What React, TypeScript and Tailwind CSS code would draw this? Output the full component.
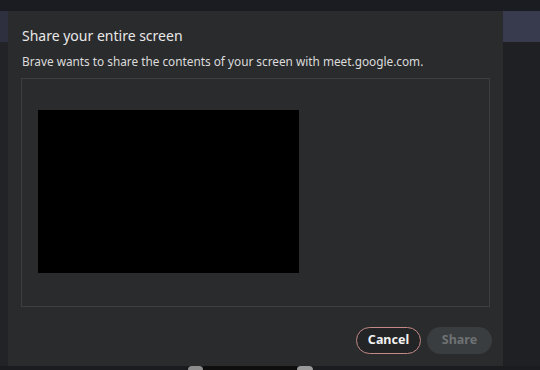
export default function App() {
  return (
    <div
      className="flex h-[370px] w-[540px] flex-col overflow-hidden bg-[#1c1d22]"
      style={{ fontFamily: '"Noto Sans", "Open Sans", sans-serif' }}
    >
      <div className="h-[11px] shrink-0 bg-[#1b1c21]" />
      <div className="flex h-[355px] shrink-0">
        <div className="flex w-[8px] flex-col">
          <div className="h-[31px] bg-[#2e3040]" />
          <div className="flex-1 bg-[#222327]" />
        </div>

        <div className="flex w-[495px] flex-col bg-[#2a2b2d] px-[13px] pb-[12px] pt-[15px]">
          <h1 className="h-[20px] pl-[1px] text-[14px] leading-[20px] text-[#e8e8e8]">
            Share your entire screen
          </h1>
          <p className="mt-[7px] h-[16px] pl-[1px] text-[11.8px] leading-[16px] text-[#dcdcdc]">
            Brave wants to share the contents of your screen with meet.google.com.
          </p>
          <div className="mt-[9px] h-[229px] w-[469px] border border-[#3d3e41] pl-[16px] pt-[31px]">
            <div className="h-[163px] w-[261px] bg-black" />
          </div>
          <div className="mt-[20px] flex justify-end gap-[6px]">
            <button className="flex h-[27px] w-[65px] items-center justify-center rounded-full border-[1.5px] border-[#c48987] bg-[#232426] text-[12.5px] font-bold text-[#f2f2f2]">
              Cancel
            </button>
            <button className="mr-[-2px] flex h-[27px] w-[65px] items-center justify-center rounded-full bg-[#3a3d3f] text-[12.5px] font-bold text-[#6e7275]">
              Share
            </button>
          </div>
        </div>

        <div className="flex flex-1 flex-col">
          <div className="h-[31px] bg-[#383b4e]" />
          <div className="flex-1 bg-[#1f2024]" />
        </div>
      </div>
      <div className="flex h-[4px] shrink-0 bg-[#1b1c1f]">
        <div className="w-[188px]" />
        <div className="w-[15px] rounded-t-sm bg-[#8d8d8d]" />
        <div className="w-[94px] bg-[#0e0e0e]" />
        <div className="w-[16px] rounded-t-sm bg-[#9a9a9a]" />
      </div>
    </div>
  );
}
